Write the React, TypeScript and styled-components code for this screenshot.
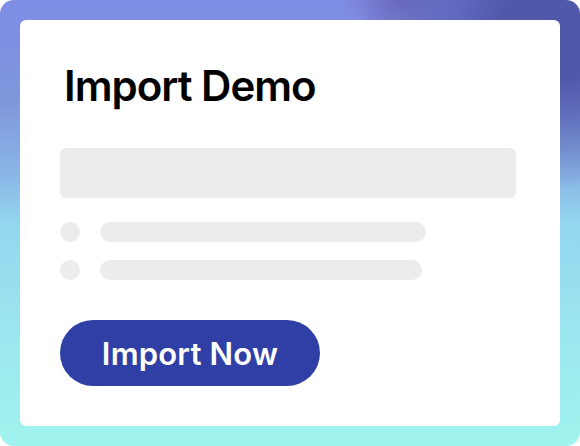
import React from "react";
import styled, { createGlobalStyle } from "styled-components";

const Global = createGlobalStyle`
  html, body { margin: 0; padding: 0; background: #ffffff; }
  * { box-sizing: border-box; }
`;

const Frame = styled.div`
  width: 580px;
  height: 446px;
  border-radius: 14px;
  overflow: hidden;
  padding: 20px;
  background:
    radial-gradient(ellipse 200px 160px at 560px 30px, rgba(80, 88, 170, 1) 30%, rgba(80, 88, 170, 0) 100%),
    radial-gradient(ellipse 60px 40px at 400px 0px, rgba(112, 104, 184, 0.8), rgba(112, 104, 184, 0) 100%),
    linear-gradient(180deg, #7e8de6 0%, #7f96dc 22%, #8ab8e6 40%, #94d6ef 50%, #9ae6ee 75%, #a0f4ee 100%);
  display: flex;
`;

const Card = styled.div`
  flex: 1;
  background: #ffffff;
  border-radius: 6px;
  padding: 40px 44px 0 40px;
  display: flex;
  flex-direction: column;
`;

const Title = styled.h1`
  margin: 0 0 0 4px;
  font-family: "Inter", "Liberation Sans", sans-serif;
  font-weight: 600;
  font-size: 42px;
  line-height: 52px;
  letter-spacing: -1px;
  color: #000000;
`;

const Block = styled.div`
  margin-top: 36px;
  height: 50px;
  border-radius: 6px;
  background: #ececec;
`;

const List = styled.div`
  margin-top: 24px;
  display: flex;
  flex-direction: column;
  gap: 18px;
`;

const Row = styled.div`
  display: flex;
  align-items: center;
  gap: 20px;
`;

const Dot = styled.div`
  width: 20px;
  height: 20px;
  border-radius: 50%;
  background: #ececec;
`;

const Bar = styled.div<{ $w: number }>`
  width: ${(p) => p.$w}px;
  height: 20px;
  border-radius: 10px;
  background: #ececec;
`;

const Button = styled.button`
  margin-top: 40px;
  width: 260px;
  height: 66px;
  border: none;
  border-radius: 33px;
  background: #2f3fa5;
  color: #ffffff;
  font-family: "Inter", "Liberation Sans", sans-serif;
  font-weight: 600;
  font-size: 31px;
  letter-spacing: 0.2px;
  display: flex;
  align-items: center;
  justify-content: center;
  padding: 0;
  cursor: pointer;
`;

export default function App() {
  return (
    <>
      <Global />
      <Frame>
        <Card>
          <Title>Import Demo</Title>
          <Block />
          <List>
            <Row>
              <Dot />
              <Bar $w={326} />
            </Row>
            <Row>
              <Dot />
              <Bar $w={322} />
            </Row>
          </List>
          <Button>Import Now</Button>
        </Card>
      </Frame>
    </>
  );
}
